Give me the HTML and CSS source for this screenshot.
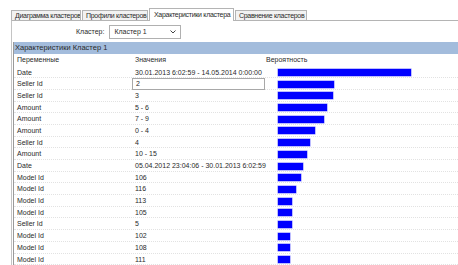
FILE: index.html
```html
<!DOCTYPE html>
<html lang="ru">
<head>
    <meta charset="UTF-8">
    <link rel="stylesheet" href="styles.css">
    <title>Характеристики кластера</title>
</head>
<body>
    <div class="tabs">
        <div class="tab tab-1">Диаграмма кластеров</div>
        <div class="tab tab-2">Профили кластеров</div>
        <div class="tab tab-3 active">Характеристики кластера</div>
        <div class="tab tab-4">Сравнение кластеров</div>
    </div>

    <div class="panel">
        <div class="filter">
            <label class="filter-label">Кластер:</label>
            <div class="combo">
                <span>Кластер 1</span>
                <svg class="combo-arrow" width="6" height="4" viewBox="0 0 6 4">
                    <path d="M0.5 0.5 L3 3 L5.5 0.5" fill="none" stroke="#444" stroke-width="1"/>
                </svg>
            </div>
        </div>

        <div class="grid">
            <div class="grid-title">Характеристики Кластер 1</div>
            <div class="row head">
                <div class="cell">Переменные</div>
                <div class="cell">Значения</div>
                <div class="cell">Вероятность</div>
            </div>
            <div class="row">
                <div class="cell">Date</div>
                <div class="cell">30.01.2013 6:02:59 - 14.05.2014 0:00:00</div>
                <div class="cell bar-cell"><div class="bar" style="width: 133px"></div></div>
            </div>
            <div class="row">
                <div class="cell">Seller Id</div>
                <div class="cell"><div class="edit">2</div></div>
                <div class="cell bar-cell"><div class="bar" style="width: 56px"></div></div>
            </div>
            <div class="row">
                <div class="cell">Seller Id</div>
                <div class="cell">3</div>
                <div class="cell bar-cell"><div class="bar" style="width: 55px"></div></div>
            </div>
            <div class="row">
                <div class="cell">Amount</div>
                <div class="cell">5 - 6</div>
                <div class="cell bar-cell"><div class="bar" style="width: 49px"></div></div>
            </div>
            <div class="row">
                <div class="cell">Amount</div>
                <div class="cell">7 - 9</div>
                <div class="cell bar-cell"><div class="bar" style="width: 46px"></div></div>
            </div>
            <div class="row">
                <div class="cell">Amount</div>
                <div class="cell">0 - 4</div>
                <div class="cell bar-cell"><div class="bar" style="width: 37px"></div></div>
            </div>
            <div class="row">
                <div class="cell">Seller Id</div>
                <div class="cell">4</div>
                <div class="cell bar-cell"><div class="bar" style="width: 32px"></div></div>
            </div>
            <div class="row">
                <div class="cell">Amount</div>
                <div class="cell">10 - 15</div>
                <div class="cell bar-cell"><div class="bar" style="width: 29px"></div></div>
            </div>
            <div class="row">
                <div class="cell">Date</div>
                <div class="cell">05.04.2012 23:04:06 - 30.01.2013 6:02:59</div>
                <div class="cell bar-cell"><div class="bar" style="width: 25px"></div></div>
            </div>
            <div class="row">
                <div class="cell">Model Id</div>
                <div class="cell">106</div>
                <div class="cell bar-cell"><div class="bar" style="width: 23px"></div></div>
            </div>
            <div class="row">
                <div class="cell">Model Id</div>
                <div class="cell">116</div>
                <div class="cell bar-cell"><div class="bar" style="width: 18px"></div></div>
            </div>
            <div class="row">
                <div class="cell">Model Id</div>
                <div class="cell">113</div>
                <div class="cell bar-cell"><div class="bar" style="width: 14px"></div></div>
            </div>
            <div class="row">
                <div class="cell">Model Id</div>
                <div class="cell">105</div>
                <div class="cell bar-cell"><div class="bar" style="width: 14px"></div></div>
            </div>
            <div class="row">
                <div class="cell">Seller Id</div>
                <div class="cell">5</div>
                <div class="cell bar-cell"><div class="bar" style="width: 14px"></div></div>
            </div>
            <div class="row">
                <div class="cell">Model Id</div>
                <div class="cell">102</div>
                <div class="cell bar-cell"><div class="bar" style="width: 12px"></div></div>
            </div>
            <div class="row">
                <div class="cell">Model Id</div>
                <div class="cell">108</div>
                <div class="cell bar-cell"><div class="bar" style="width: 12px"></div></div>
            </div>
            <div class="row">
                <div class="cell">Model Id</div>
                <div class="cell">111</div>
                <div class="cell bar-cell"><div class="bar" style="width: 12px"></div></div>
            </div>
        </div>
    </div>
</body>
</html>
```

FILE: styles.css
```css
body {
    font-family: "Liberation Sans", Arial, sans-serif;
    font-size: 7px;
    color: #2a2a2a;
    background-color: #fff;
    margin: 0;
    padding: 8px 0 0 11px;
    height: 257px;
    overflow: hidden;
}

/* tab strip */
.tabs {
    display: flex;
    align-items: flex-end;
    height: 12px;
}

.tab {
    box-sizing: border-box;
    height: 10px;
    line-height: 9px;
    padding-left: 3px;
    background-color: #f2f2f2;
    border: 1px solid #b4b4b4;
    border-bottom: none;
    margin-right: 1px;
    white-space: nowrap;
    overflow: hidden;
    letter-spacing: -0.3px;
}

.tab-1 { width: 70px; }
.tab-2 { width: 66px; }
.tab-3 { width: 85px; }
.tab-4 { width: 72px; }

.tab.active {
    height: 13px;
    line-height: 11px;
    background-color: #fff;
    padding-left: 4px;
    margin-bottom: -1px;
    position: relative;
}

/* content panel */
.panel {
    border-top: 1px solid #b4b4b4;
    border-left: 1px solid #c4c4c4;
    padding-left: 1px;
    height: 245px;
}

.filter {
    display: flex;
    align-items: center;
    height: 21px;
    padding-left: 63px;
}

.filter-label {
    margin-right: 5px;
}

.combo {
    box-sizing: border-box;
    width: 72px;
    height: 14px;
    border: 1px solid #b0b0b0;
    display: flex;
    align-items: center;
    justify-content: space-between;
    padding: 0 4px 0 4px;
    background-color: #fff;
}

/* grid */
.grid {
    border-left: 1px solid #9a9a9a;
    height: 224px;
}

.grid-title {
    background-color: #a3bcdc;
    height: 12px;
    line-height: 12px;
    padding-left: 1px;
    font-size: 7.5px;
}

.row {
    display: grid;
    grid-template-columns: 118px 131px 1fr;
    height: 11.7px;
    box-sizing: border-box;
    border-bottom: 1px dotted #e2e2e2;
}

.row.head {
    height: 12.5px;
    border-bottom: none;
}

.cell {
    padding-left: 3px;
    line-height: 12px;
    white-space: nowrap;
    overflow: visible;
}

.edit {
    box-sizing: border-box;
    margin-left: -3px;
    height: 12px;
    margin-top: -0.5px;
    border: 1px solid #a8a8a8;
    background-color: #fff;
    padding-left: 3px;
    line-height: 10px;
    width: 133px;
}

.bar-cell {
    display: flex;
    align-items: center;
    padding-left: 15px;
}

.bar {
    height: 7px;
    background-color: #0000ff;
    box-shadow: 0 0 0 0.5px #7d7dff;
}
```
